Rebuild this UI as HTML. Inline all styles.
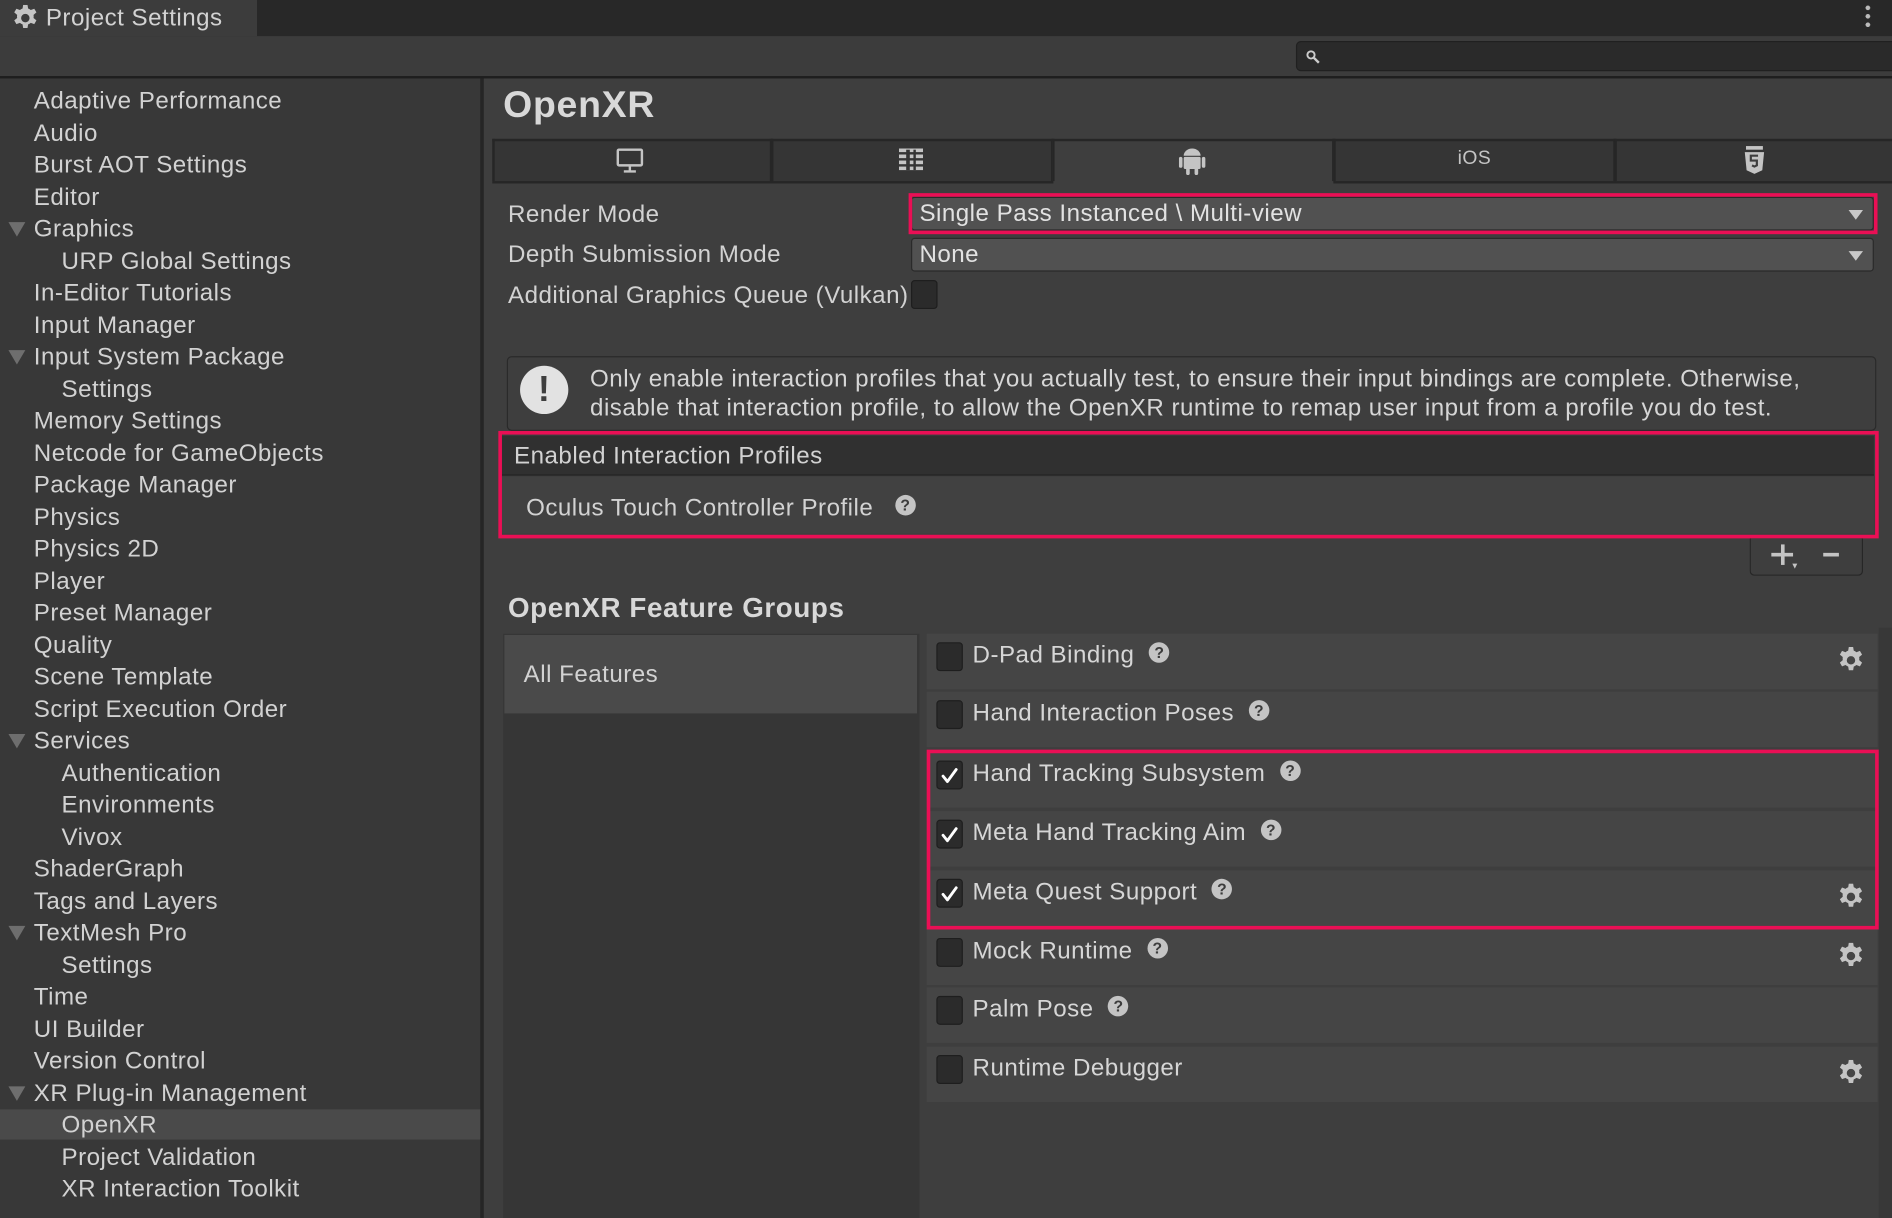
<!DOCTYPE html>
<html><head><meta charset="utf-8"><style>
*{box-sizing:border-box;margin:0;padding:0}
html,body{width:1892px;height:1218px;overflow:hidden;background:#383838}
#w{position:absolute;left:0;top:0;width:1568px;height:1009px;transform:scale(1.20663,1.20714);transform-origin:0 0;font-family:"Liberation Sans",sans-serif;color:#d2d2d2;background:#383838;overflow:hidden;letter-spacing:0.4px}
.a{position:absolute}
.side div{position:absolute;font-size:20px;white-space:nowrap;line-height:24px}
.tri{position:absolute;width:0;height:0;border-left:7px solid transparent;border-right:7px solid transparent;border-top:12px solid #6e6e6e}
.tab{position:absolute;top:115px;height:35px;background:#353535;border:2px solid #262626;border-bottom:none}
.lbl{position:absolute;font-size:20px;white-space:nowrap}
.dd{position:absolute;background:#515151;border:1px solid #2a2a2a;border-radius:3px;font-size:20px;color:#e2e2e2;padding-left:6px}
.arr{position:absolute;right:8px;width:0;height:0;border-left:6px solid transparent;border-right:6px solid transparent;border-top:8px solid #c8c8c8}
.row{position:absolute;left:768px;width:788px;height:46px;background:#454545}
.cb{position:absolute;left:8px;top:7px;width:22px;height:24px;background:#2b2b2b;border:1px solid #1e1e1e;border-radius:3px}
.row .t{position:absolute;left:38px;top:7px;font-size:20px;white-space:nowrap;color:#d6d6d6}
.q{display:inline-block;width:17px;height:17px;border-radius:50%;background:#c4c4c4;color:#3c3c3c;font-size:13px;font-weight:bold;text-align:center;line-height:17px;margin-left:12px;vertical-align:4px;letter-spacing:0}
.gear{position:absolute;right:11px;top:11px}
.red{position:absolute;border:3px solid #ea0f55}
</style></head><body><div id="w">
<svg width="0" height="0" style="position:absolute"><defs><g id="g"><path fill="#c4c4c4" fill-rule="evenodd" d="M9.2 0h3.6l.5 3a8 8 0 0 1 2.2 1.3l2.9-1.1 1.8 3.1-2.4 2a8 8 0 0 1 0 2.6l2.4 2-1.8 3.1-2.9-1.1a8 8 0 0 1-2.2 1.3l-.5 3H9.2l-.5-3a8 8 0 0 1-2.2-1.3l-2.9 1.1-1.8-3.1 2.4-2a8 8 0 0 1 0-2.6l-2.4-2 1.8-3.1 2.9 1.1A8 8 0 0 1 8.7 3zM11 7.5a3.5 3.5 0 1 0 0 7 3.5 3.5 0 0 0 0-7z"/></g>
<g id="ck"><path d="M5 12l4 5 8-11" fill="none" stroke="#fff" stroke-width="2.6" stroke-linecap="round" stroke-linejoin="round"/></g></defs></svg>
<div class="a" style="left:0;top:0;width:1568px;height:30px;background:#282828"></div>
<div class="a" style="left:0;top:0;width:213px;height:30px;background:#3c3c3c"></div>
<svg class="a" style="left:10px;top:4px" width="22" height="22" viewBox="0 0 22 22"><use href="#g"/></svg>
<div class="a" style="left:38px;top:4px;font-size:20px;color:#d2d2d2">Project Settings</div>
<div class="a" style="left:1546px;top:3px;width:4px;height:20px;background:radial-gradient(circle,#bbb 1.8px,transparent 2px) 0 0/4px 7px"></div>
<div class="a" style="left:0;top:30px;width:1568px;height:33px;background:#3c3c3c"></div>
<div class="a" style="left:1074px;top:34px;width:500px;height:25px;background:#2a2a2a;border:1px solid #202020;border-radius:4px"></div>
<svg class="a" style="left:1082px;top:41px" width="12" height="12" viewBox="0 0 12 12"><circle cx="4.5" cy="4.5" r="3" fill="none" stroke="#ccc" stroke-width="1.6"/><path d="M7 7l4 4" stroke="#ccc" stroke-width="2"/></svg>
<div class="a" style="left:0;top:63px;width:1568px;height:2px;background:#1e1e1e"></div>
<div class="a" style="left:398px;top:65px;width:3px;height:944px;background:#252525"></div>
<div class="a" style="left:401px;top:65px;width:1167px;height:944px;background:#3e3e3e"></div>
<div class="a" style="left:0;top:919px;width:398px;height:25px;background:#4a4a4a"></div>
<div class="side">
<div style="left:28px;top:72px">Adaptive Performance</div>
<div style="left:28px;top:99px">Audio</div>
<div style="left:28px;top:125px">Burst AOT Settings</div>
<div style="left:28px;top:152px">Editor</div>
<div style="left:28px;top:178px">Graphics</div>
<div style="left:51px;top:205px">URP Global Settings</div>
<div style="left:28px;top:231px">In-Editor Tutorials</div>
<div style="left:28px;top:258px">Input Manager</div>
<div style="left:28px;top:284px">Input System Package</div>
<div style="left:51px;top:311px">Settings</div>
<div style="left:28px;top:337px">Memory Settings</div>
<div style="left:28px;top:364px">Netcode for GameObjects</div>
<div style="left:28px;top:390px">Package Manager</div>
<div style="left:28px;top:417px">Physics</div>
<div style="left:28px;top:443px">Physics 2D</div>
<div style="left:28px;top:470px">Player</div>
<div style="left:28px;top:496px">Preset Manager</div>
<div style="left:28px;top:523px">Quality</div>
<div style="left:28px;top:549px">Scene Template</div>
<div style="left:28px;top:576px">Script Execution Order</div>
<div style="left:28px;top:602px">Services</div>
<div style="left:51px;top:629px">Authentication</div>
<div style="left:51px;top:655px">Environments</div>
<div style="left:51px;top:682px">Vivox</div>
<div style="left:28px;top:708px">ShaderGraph</div>
<div style="left:28px;top:735px">Tags and Layers</div>
<div style="left:28px;top:761px">TextMesh Pro</div>
<div style="left:51px;top:788px">Settings</div>
<div style="left:28px;top:814px">Time</div>
<div style="left:28px;top:841px">UI Builder</div>
<div style="left:28px;top:867px">Version Control</div>
<div style="left:28px;top:894px">XR Plug-in Management</div>
<div style="left:51px;top:920px">OpenXR</div>
<div style="left:51px;top:947px">Project Validation</div>
<div style="left:51px;top:973px">XR Interaction Toolkit</div>
</div>
<div class="tri" style="left:7px;top:184px"></div>
<div class="tri" style="left:7px;top:290px"></div>
<div class="tri" style="left:7px;top:608px"></div>
<div class="tri" style="left:7px;top:767px"></div>
<div class="tri" style="left:7px;top:900px"></div>

<div class="a" style="left:417px;top:69px;font-size:31px;font-weight:bold;color:#d8d8d8;letter-spacing:0.6px">OpenXR</div>
<div class="tab" style="left:408px;width:232px"></div>
<div class="tab" style="left:639px;width:234px"></div>
<div class="tab" style="left:872px;width:234px;background:#3e3e3e"></div>
<div class="tab" style="left:1105px;width:234px"></div>
<div class="tab" style="left:1338px;width:240px"></div>
<div class="a" style="left:408px;top:150px;width:465px;height:2px;background:#262626"></div>
<div class="a" style="left:1105px;top:150px;width:463px;height:2px;background:#262626"></div>
<svg class="a" style="left:510px;top:122px" width="24" height="22" viewBox="0 0 24 22"><rect x="2" y="2" width="20" height="13" rx="1" fill="none" stroke="#c4c4c4" stroke-width="2"/><path d="M12 15v4M7 20h10" stroke="#c4c4c4" stroke-width="2"/></svg>
<svg class="a" style="left:745px;top:123px" width="20" height="18" viewBox="0 0 20 18"><g fill="#c4c4c4"><rect x="0" y="0" width="20" height="3"/><rect x="0" y="5" width="20" height="3"/><rect x="0" y="10" width="20" height="3"/><rect x="0" y="15" width="20" height="3"/></g><g fill="#353535"><rect x="6" y="1" width="3" height="17"/><rect x="12" y="1" width="2" height="17"/></g></svg>
<svg class="a" style="left:977px;top:120px" width="22" height="26" viewBox="0 0 22 26"><g fill="#c4c4c4"><path d="M4 9a7 6 0 0 1 14 0z"/><rect x="4" y="10" width="14" height="10" rx="1"/><rect x="0" y="10" width="3" height="9" rx="1.5"/><rect x="19" y="10" width="3" height="9" rx="1.5"/><rect x="6" y="19" width="3" height="6" rx="1.5"/><rect x="13" y="19" width="3" height="6" rx="1.5"/></g></svg>
<div class="a" style="left:1208px;top:123px;font-size:16px;color:#c4c4c4">iOS</div>
<svg class="a" style="left:1445px;top:120px" width="18" height="25" viewBox="0 0 18 25"><path d="M1 6h16l-1.5 15L9 24l-6.5-3z" fill="#c4c4c4"/><rect x="2" y="1" width="14" height="3" fill="#c4c4c4"/><path d="M12 9H6v4h5v4l-2 1-2-1" fill="none" stroke="#3e3e3e" stroke-width="1.8"/></svg>

<div class="lbl" style="left:421px;top:167px">Render Mode</div>
<div class="lbl" style="left:421px;top:200px">Depth Submission Mode</div>
<div class="lbl" style="left:421px;top:234px">Additional Graphics Queue (Vulkan)</div>
<div class="dd" style="left:755px;top:163px;width:798px;height:28px;line-height:27px">Single Pass Instanced \ Multi-view<div class="arr" style="top:10px"></div></div>
<div class="red" style="left:753px;top:160px;width:803px;height:34px"></div>
<div class="dd" style="left:755px;top:197px;width:798px;height:28px;line-height:27px">None<div class="arr" style="top:10px"></div></div>
<div class="a" style="left:755px;top:232px;width:22px;height:24px;background:#2b2b2b;border:1px solid #1e1e1e;border-radius:3px"></div>

<div class="a" style="left:420px;top:295px;width:1135px;height:62px;border:1px solid #2a2a2a;border-radius:4px;background:#3e3e3e"></div>
<div class="a" style="left:431px;top:303px;width:40px;height:40px;border-radius:50%;background:#e2e2e2;color:#3e3e3e;font-size:30px;font-weight:bold;text-align:center;line-height:40px">!</div>
<div class="a" style="left:489px;top:302px;font-size:20px;line-height:24px;color:#d6d6d6;white-space:nowrap">Only enable interaction profiles that you actually test, to ensure their input bindings are complete. Otherwise,<br>disable that interaction profile, to allow the OpenXR runtime to remap user input from a profile you do test.</div>

<div class="a" style="left:416px;top:361px;width:1137px;height:33px;background:#303030;border-bottom:1px solid #232323"></div>
<div class="a" style="left:426px;top:367px;font-size:20px">Enabled Interaction Profiles</div>
<div class="a" style="left:416px;top:395px;width:1137px;height:47px;background:#414141"></div>
<div class="a" style="left:436px;top:410px;font-size:20px">Oculus Touch Controller Profile<span class="q" style="margin-left:18px">?</span></div>
<div class="red" style="left:413px;top:357px;width:1144px;height:89px"></div>
<div class="a" style="left:1450px;top:446px;width:94px;height:31px;border:1px solid #262626;border-top:none;border-radius:0 0 4px 4px;background:#3e3e3e"></div>
<div class="a" style="left:1468px;top:451px;width:18px;height:3px;background:#c4c4c4;top:458px"></div>
<div class="a" style="left:1475.5px;top:451px;width:3px;height:17px;background:#c4c4c4"></div>
<div class="a" style="left:1484px;top:466px;font-size:7px;color:#c4c4c4">▼</div>
<div class="a" style="left:1511px;top:458px;width:13px;height:3px;background:#c4c4c4"></div>

<div class="a" style="left:421px;top:490px;font-size:23px;font-weight:bold;color:#d8d8d8;letter-spacing:0.5px">OpenXR Feature Groups</div>
<div class="a" style="left:417px;top:525px;width:345px;height:484px;background:#363636"></div>
<div class="a" style="left:418px;top:526px;width:342px;height:65px;background:#4a4a4a"></div>
<div class="a" style="left:434px;top:548px;font-size:20px">All Features</div>
<div class="a" style="left:1557px;top:520px;width:11px;height:489px;background:#383838"></div>

<div class="row" style="top:525px"><div class="cb"></div><div class="t">D-Pad Binding<span class="q">?</span></div><svg class="gear" width="22" height="22" viewBox="0 0 22 22"><use href="#g"/></svg></div>
<div class="row" style="top:573px"><div class="cb"></div><div class="t">Hand Interaction Poses<span class="q">?</span></div></div>
<div class="row" style="top:623px"><div class="cb"><svg width="20" height="22" viewBox="0 0 22 22"><use href="#ck"/></svg></div><div class="t">Hand Tracking Subsystem<span class="q">?</span></div></div>
<div class="row" style="top:672px"><div class="cb"><svg width="20" height="22" viewBox="0 0 22 22"><use href="#ck"/></svg></div><div class="t">Meta Hand Tracking Aim<span class="q">?</span></div></div>
<div class="row" style="top:721px"><div class="cb"><svg width="20" height="22" viewBox="0 0 22 22"><use href="#ck"/></svg></div><div class="t">Meta Quest Support<span class="q">?</span></div><svg class="gear" width="22" height="22" viewBox="0 0 22 22"><use href="#g"/></svg></div>
<div class="row" style="top:770px"><div class="cb"></div><div class="t">Mock Runtime<span class="q">?</span></div><svg class="gear" width="22" height="22" viewBox="0 0 22 22"><use href="#g"/></svg></div>
<div class="row" style="top:818px"><div class="cb"></div><div class="t">Palm Pose<span class="q">?</span></div></div>
<div class="row" style="top:867px"><div class="cb"></div><div class="t">Runtime Debugger</div><svg class="gear" width="22" height="22" viewBox="0 0 22 22"><use href="#g"/></svg></div>
<div class="red" style="left:768px;top:621px;width:789px;height:149px"></div>
</div></body></html>
